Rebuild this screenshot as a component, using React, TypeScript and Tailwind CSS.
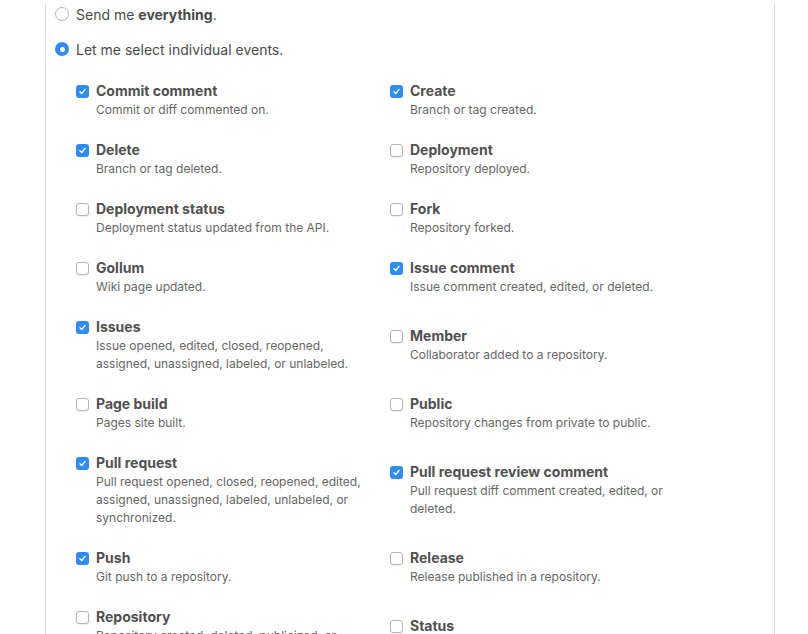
import React from 'react';

type Hook = { title: string; desc: string; on: boolean };

const LEFT: Hook[] = [
  { title: 'Commit comment', desc: 'Commit or diff commented on.', on: true },
  { title: 'Delete', desc: 'Branch or tag deleted.', on: true },
  { title: 'Deployment status', desc: 'Deployment status updated from the API.', on: false },
  { title: 'Gollum', desc: 'Wiki page updated.', on: false },
  { title: 'Issues', desc: 'Issue opened, edited, closed, reopened, assigned, unassigned, labeled, or unlabeled.', on: true },
  { title: 'Page build', desc: 'Pages site built.', on: false },
  { title: 'Pull request', desc: 'Pull request opened, closed, reopened, edited, assigned, unassigned, labeled, unlabeled, or synchronized.', on: true },
  { title: 'Push', desc: 'Git push to a repository.', on: true },
  { title: 'Repository', desc: 'Repository created, deleted, publicized, or privatized.', on: false },
];

const RIGHT: Hook[] = [
  { title: 'Create', desc: 'Branch or tag created.', on: true },
  { title: 'Deployment', desc: 'Repository deployed.', on: false },
  { title: 'Fork', desc: 'Repository forked.', on: false },
  { title: 'Issue comment', desc: 'Issue comment created, edited, or deleted.', on: true },
  { title: 'Member', desc: 'Collaborator added to a repository.', on: false },
  { title: 'Public', desc: 'Repository changes from private to public.', on: false },
  { title: 'Pull request review comment', desc: 'Pull request diff comment created, edited, or deleted.', on: true },
  { title: 'Release', desc: 'Release published in a repository.', on: false },
  { title: 'Status', desc: 'Commit status updated from the API.', on: false },
];

const Check = ({ on }: { on: boolean }) =>
  on ? (
    <span className="mt-[3px] flex h-[13px] w-[13px] shrink-0 items-center justify-center rounded-[3px] bg-[#2f8cf6]">
      <svg width="9" height="9" viewBox="0 0 9 9" fill="none">
        <path d="M2 4.8 L3.8 6.6 L7 2.4" stroke="white" strokeWidth="1.4" strokeLinecap="round" strokeLinejoin="round" />
      </svg>
    </span>
  ) : (
    <span className="mt-[3px] h-[13px] w-[13px] shrink-0 rounded-[3px] border border-[#b4b4b4] bg-white shadow-[0_1px_1px_rgba(0,0,0,0.06)]" />
  );

const Radio = ({ on }: { on: boolean }) =>
  on ? (
    <span className="flex h-[14px] w-[14px] shrink-0 items-center justify-center rounded-full bg-[#2f8cf6]">
      <span className="h-[5px] w-[5px] rounded-full bg-white" />
    </span>
  ) : (
    <span className="h-[14px] w-[14px] shrink-0 rounded-full border border-[#b4b4b4] bg-white" />
  );

const Event = ({ h }: { h: Hook }) => (
  <div className="flex gap-[7px]">
    <Check on={h.on} />
    <div className="w-[280px]">
      <div className="text-[14px] leading-[18px] font-bold text-[#505050]">{h.title}</div>
      <div className="relative top-[1px] text-[12px] leading-[18px] text-[#666]">{h.desc}</div>
    </div>
  </div>
);

export default function App() {
  return (
    <div className="h-[634px] w-[808px] overflow-hidden bg-white" style={{ fontFamily: 'Inter, "Liberation Sans", sans-serif' }}>
      <div className="ml-[45px] h-full w-[730px] border-x border-[#dcdcdc] pl-[9px]">
        <div className="mt-[4px] flex h-5 items-center gap-[7px] text-[14px] text-[#4a4a4a]">
          <Radio on={false} />
          <span>
            Send me <b>everything</b>.
          </span>
        </div>
        <div className="mt-[15px] flex h-5 items-center gap-[7px] text-[14px] text-[#4a4a4a]">
          <Radio on={true} />
          <span>Let me select individual events.</span>
        </div>

        <div className="mt-[23px] grid grid-cols-[314px_1fr] items-center gap-y-[23px] pl-[21px]">
          {LEFT.map((l, i) => (
            <React.Fragment key={l.title}>
              <Event h={l} />
              <Event h={RIGHT[i]} />
            </React.Fragment>
          ))}
        </div>
      </div>
    </div>
  );
}
